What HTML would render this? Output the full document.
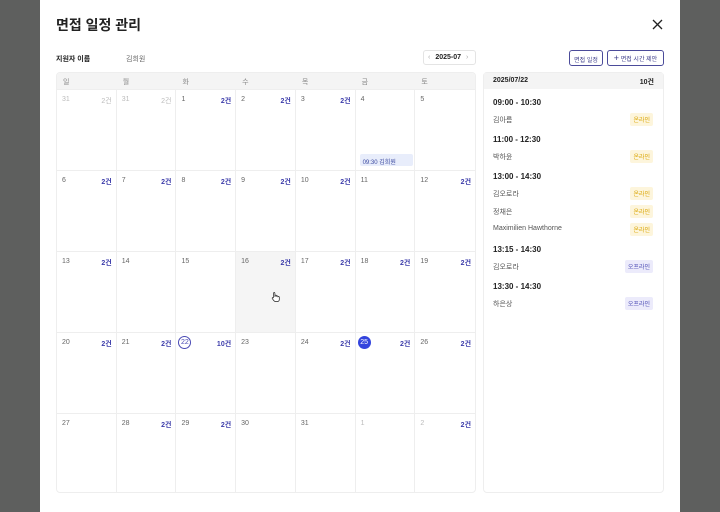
<!DOCTYPE html><html><head><meta charset="utf-8"><style>
*{box-sizing:border-box;margin:0;padding:0}
body{width:720px;height:512px;background:#5e5f5e;font-family:"Liberation Sans","Noto Sans CJK KR",sans-serif;position:relative;overflow:hidden;color:#222}
.m{position:absolute;left:40px;top:0;width:640px;height:512px;background:#fff}
.a{position:absolute}
.cal{position:absolute;left:56px;top:72px;width:420px;height:421px;border:1px solid #eee;border-radius:4px;overflow:hidden}
.hd{height:16px;background:#f4f4f4;display:flex}
.hd div{width:60px;font-size:7px;color:#888;padding:4px 0 0 6px}
.row{display:flex;height:81px;border-top:1px solid #eee}
.c{width:60px;border-right:1px solid #eee;position:relative;font-size:7px;color:#666}
.c:last-child{border-right:none}
.d{position:absolute;left:5px;top:6px}
.n{position:absolute;right:4px;top:6px;color:#3c3caa;font-weight:bold}
.g{color:#bbb}.g .n{color:#bbb;font-weight:normal}
.rp{position:absolute;left:483px;top:72px;width:181px;height:421px;border:1px solid #eee;border-radius:4px}
.t{font-size:8px;font-weight:bold;position:absolute;left:9px}
.nm{font-size:7px;color:#555;position:absolute;left:9px}
.b{position:absolute;right:10px;font-size:6px;padding:2px 3px;border-radius:2px}
.on{background:#fdf5dc;color:#d9a400}.off{background:#ecebfb;color:#4b4bb5}
</style></head><body><div class="m">
<div class="a" style="left:16px;top:15px;font-size:14px;font-weight:bold">면접 일정 관리</div>
<svg class="a" style="left:612px;top:19px" width="11" height="11" viewBox="0 0 11 11"><path d="M1 1L10 10M10 1L1 10" stroke="#222" stroke-width="1.3"/></svg>
<div class="a" style="left:16px;top:54px;font-size:7px;font-weight:bold">지원자 이름</div>
<div class="a" style="left:86px;top:54px;font-size:7px;color:#666">김희원</div>
<div class="a" style="left:383px;top:50px;width:53px;height:15px;border:1px solid #e4e4e4;border-radius:3px;font-size:7px;padding-top:3px"><span style="color:#aaa;margin-left:4px">‹</span><b style="margin-left:5px">2025-07</b><span style="color:#aaa;margin-left:5px">›</span></div>
<div class="a" style="left:529px;top:50px;width:34px;height:16px;border:1px solid #4b4b9a;border-radius:3px;font-size:6px;color:#3c3c8a;text-align:center;padding-top:4px">면접 일정</div>
<div class="a" style="left:567px;top:50px;width:57px;height:16px;border:1px solid #4b4b9a;border-radius:3px;font-size:6px;color:#3c3c8a;text-align:center;padding-top:3px"><span style="font-size:9px;line-height:8px">+</span> 면접 시간 제안</div>
</div>
<div class="cal">
<div class="hd"><div>일</div><div>월</div><div>화</div><div>수</div><div>목</div><div>금</div><div>토</div></div>
<div class="row"><div class="c g"><span class="d">31</span><span class="n">2건</span></div><div class="c g"><span class="d">31</span><span class="n">2건</span></div><div class="c"><span class="d">1</span><span class="n">2건</span></div><div class="c"><span class="d">2</span><span class="n">2건</span></div><div class="c"><span class="d">3</span><span class="n">2건</span></div><div class="c"><span class="d">4</span><div class="a" style="left:4px;top:64px;width:53px;height:12px;background:#e8edfb;border-radius:2px;font-size:6px;color:#3c4aa0;padding:3px 0 0 3px">09:30 김희원</div></div><div class="c"><span class="d">5</span></div></div>
<div class="row"><div class="c"><span class="d">6</span><span class="n">2건</span></div><div class="c"><span class="d">7</span><span class="n">2건</span></div><div class="c"><span class="d">8</span><span class="n">2건</span></div><div class="c"><span class="d">9</span><span class="n">2건</span></div><div class="c"><span class="d">10</span><span class="n">2건</span></div><div class="c"><span class="d">11</span></div><div class="c"><span class="d">12</span><span class="n">2건</span></div></div>
<div class="row"><div class="c"><span class="d">13</span><span class="n">2건</span></div><div class="c"><span class="d">14</span></div><div class="c"><span class="d">15</span></div><div class="c" style="background:#f5f5f5"><span class="d">16</span><span class="n">2건</span><svg class="a" style="left:35px;top:40px" width="9" height="10" viewBox="0 0 9 10"><path d="M2.5 5V1.2a.7.7 0 0 1 1.4 0V4.5h.2V3.8a.7.7 0 0 1 1.4 0v.8a.7.7 0 0 1 1.4 0v.6a.7.7 0 0 1 1.4 0V7.5c0 1.3-1 2-2.2 2H4.5c-.8 0-1.3-.4-1.8-1L1.2 6.5a.7.7 0 0 1 1.1-.8z" fill="#fff" stroke="#222" stroke-width=".7"/></svg></div><div class="c"><span class="d">17</span><span class="n">2건</span></div><div class="c"><span class="d">18</span><span class="n">2건</span></div><div class="c"><span class="d">19</span><span class="n">2건</span></div></div>
<div class="row"><div class="c"><span class="d">20</span><span class="n">2건</span></div><div class="c"><span class="d">21</span><span class="n">2건</span></div><div class="c"><span class="a" style="left:2px;top:3px;width:13px;height:13px;border:1px solid #4b4bb5;border-radius:50%;text-align:center;font-size:7px;line-height:11px;color:#4b4bb5">22</span><span class="n">10건</span></div><div class="c"><span class="d">23</span></div><div class="c"><span class="d">24</span><span class="n">2건</span></div><div class="c"><span class="a" style="left:2px;top:3px;width:13px;height:13px;background:#3344dd;border-radius:50%;text-align:center;font-size:7px;line-height:13px;color:#fff">25</span><span class="n">2건</span></div><div class="c"><span class="d">26</span><span class="n">2건</span></div></div>
<div class="row"><div class="c"><span class="d">27</span></div><div class="c"><span class="d">28</span><span class="n">2건</span></div><div class="c"><span class="d">29</span><span class="n">2건</span></div><div class="c"><span class="d">30</span></div><div class="c"><span class="d">31</span></div><div class="c g"><span class="d">1</span></div><div class="c"><span class="d g">2</span><span class="n">2건</span></div></div>
</div>
<div class="rp">
<div style="height:16px;background:#f4f4f4;font-size:7px;font-weight:bold;padding:4px 9px;display:flex;justify-content:space-between"><span>2025/07/22</span><span>10건</span></div>
<div class="t" style="top:25px">09:00 - 10:30</div>
<div class="nm" style="top:42px">김아름</div><span class="b on" style="top:40px">온라인</span>
<div class="t" style="top:62px">11:00 - 12:30</div>
<div class="nm" style="top:79px">박하윤</div><span class="b on" style="top:77px">온라인</span>
<div class="t" style="top:99px">13:00 - 14:30</div>
<div class="nm" style="top:116px">김오로라</div><span class="b on" style="top:114px">온라인</span>
<div class="nm" style="top:134px">정채은</div><span class="b on" style="top:132px">온라인</span>
<div class="nm" style="top:152px">Maximilien Hawthorne</div><span class="b on" style="top:150px">온라인</span>
<div class="t" style="top:172px">13:15 - 14:30</div>
<div class="nm" style="top:189px">김오로라</div><span class="b off" style="top:187px">오프라인</span>
<div class="t" style="top:209px">13:30 - 14:30</div>
<div class="nm" style="top:226px">하은상</div><span class="b off" style="top:224px">오프라인</span>
</div>
</body></html>
